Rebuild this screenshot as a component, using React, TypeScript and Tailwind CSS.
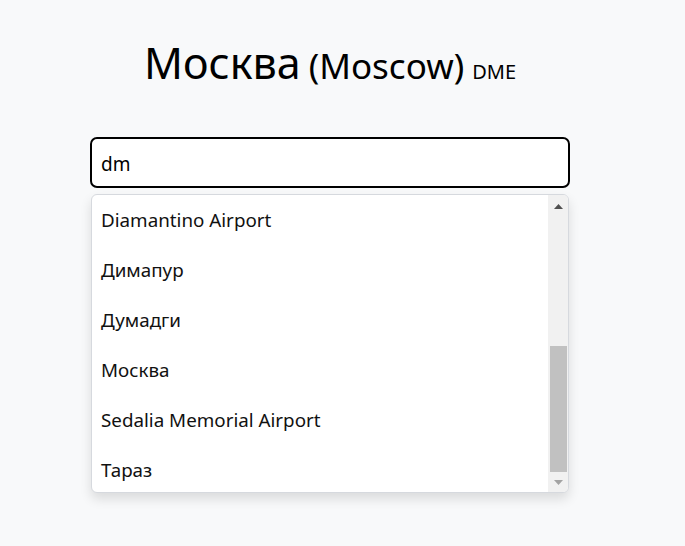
import React from "react";

const items = ["Diamantino Airport", "Димапур", "Думадги", "Москва", "Sedalia Memorial Airport", "Тараз"];

export default function App() {
  return (
    <div className="min-h-[546px] w-full bg-[#f8f9fa] text-black" style={{ fontFamily: '"Noto Sans", "Open Sans", sans-serif' }}>
      <div className="ml-[90px] flex w-[480px] flex-col pt-[41px]">
        <h1 className="flex items-baseline justify-center gap-[8px] leading-none">
          <span className="text-[43px]">Москва</span>
          <span className="text-[35px]">(Moscow)</span>
          <span className="text-[20px]">DME</span>
        </h1>

        <div className="mt-[53px] flex h-[51px] items-center rounded-[7px] border-2 border-black bg-white px-[9px] pt-[3px] text-[19px]">
          dm
        </div>

        <div className="mx-[1px] mt-[6px] flex h-[299px] overflow-hidden rounded-[6px] border border-[#d6d9de] bg-white shadow-[0_6px_12px_rgba(0,0,0,0.12)]">
          <ul className="flex-1">
            {items.map((it) => (
              <li key={it} className="flex h-[50px] items-center px-[9px] text-[18.8px] text-[#111]">
                {it}
              </li>
            ))}
          </ul>
          <div className="flex w-[20px] flex-col items-center bg-[#f1f1f1]">
            <div className="flex h-[16px] w-full items-center justify-center pt-[6px]">
              <svg width="9" height="5" viewBox="0 0 9 5"><path d="M0 5 L4.5 0 L9 5 Z" fill="#505050" /></svg>
            </div>
            <div className="flex-1 w-full" />
            <div className="h-[126px] w-[17px] bg-[#c1c1c1]" />
            <div className="flex h-[20px] w-full items-center justify-center">
              <svg width="9" height="5" viewBox="0 0 9 5"><path d="M0 0 L9 0 L4.5 5 Z" fill="#a3a3a3" /></svg>
            </div>
          </div>
        </div>
      </div>
    </div>
  );
}
